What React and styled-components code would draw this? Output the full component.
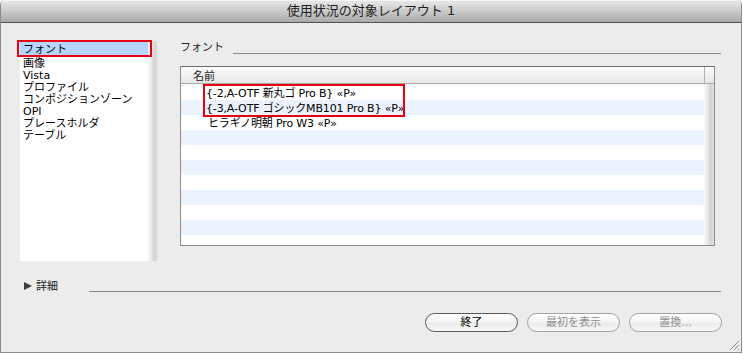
import React from 'react';
import styled, { createGlobalStyle } from 'styled-components';

const FONT = '"DejaVu Sans", "Noto Sans CJK JP", "Noto Sans", sans-serif';

const Global = createGlobalStyle`
  html, body { margin: 0; padding: 0; background: #ffffff; }
  body { font-family: ${FONT}; color: #000; }
  * { box-sizing: border-box; }
`;

const Window = styled.div`
  position: relative;
  width: 742px;
  height: 353px;
  border: 1px solid #8c8c8c;
  border-top: none;
  border-radius: 5px 5px 0 0;
  background: #ececec;
  display: flex;
  flex-direction: column;
  overflow: hidden;
`;

const TitleBar = styled.div`
  height: 23px;
  flex: none;
  border-bottom: 1px solid #555;
  border-radius: 5px 5px 0 0;
  background: linear-gradient(#e9e9e9, #d2d2d2 40%, #a9a9a9);
  box-shadow: inset 0 1px 0 #f6f6f6;
  text-align: center;
  font-size: 13px;
  line-height: 22px;
  color: #1e1e1e;
`;

const Body = styled.div`
  flex: 1;
  display: flex;
  flex-direction: column;
  padding: 17px 19px 0 19px;
`;

const MainRow = styled.div`
  display: flex;
  align-items: flex-start;
`;

const Sidebar = styled.div`
  display: flex;
  width: 138px;
  height: 220px;
  margin-top: 1px;
`;

const SideList = styled.div`
  position: relative;
  width: 128px;
  background: #fff;
`;

const SideItem = styled.div`
  font-size: 11px;
  line-height: 16px;
  height: ${p => (p.$selected ? '15px' : '12px')};
  padding: ${p => (p.$selected ? '1px' : '0')} 0 0 3px;
  background: ${p => (p.$selected ? '#b5d5ff' : 'transparent')};
  white-space: nowrap;
`;

const ScrollStrip = styled.div`
  width: ${p => p.$w || 10}px;
  flex: none;
  background: linear-gradient(to right, #f8f8f8, #e8e8e8 35%, #d2d2d2 65%, #e4e4e4);
`;

const Annotation = styled.div`
  position: absolute;
  border: 2px solid #e60012;
  pointer-events: none;
`;

const RightPanel = styled.div`
  margin-left: 22px;
  width: 541px;
  display: flex;
  flex-direction: column;
`;

const SectionHeader = styled.div`
  display: flex;
  height: 14px;
`;

const SectionLabel = styled.span`
  font-size: 11px;
  line-height: 15px;
  color: #222;
`;

const Rule = styled.div`
  flex: 1;
  height: 1px;
  align-self: flex-end;
  margin: 0 ${p => p.$right || 0}px ${p => p.$bottom || 0}px ${p => p.$left}px;
  background: #8a8a8a;
`;

const Table = styled.div`
  margin-top: 12px;
  width: 535px;
  height: 180px;
  border: 1px solid #8d8d8d;
  border-top-color: #6c6c6c;
  background: #fff;
  display: flex;
  flex-direction: column;
`;

const TableHead = styled.div`
  display: flex;
  height: 17px;
  flex: none;
  border-bottom: 1px solid #a8a8a8;
  background: linear-gradient(#fdfdfd, #f1f1f1 50%, #e6e6e6);
`;

const HeadCell = styled.div`
  flex: 1;
  padding-left: 12px;
  font-size: 11px;
  line-height: 19px;
  height: 16px;
  color: #222;
`;

const HeadCorner = styled.div`
  width: 10px;
  border-left: 1px solid #b0b0b0;
`;

const TableBody = styled.div`
  position: relative;
  flex: 1;
  display: flex;
  overflow: hidden;
`;

const Rows = styled.div`
  flex: 1;
  padding-top: 1px;
  overflow: hidden;
`;

const Row = styled.div`
  height: 15px;
  line-height: 17px;
  padding-left: ${p => p.$indent}px;
  font-size: 11px;
  letter-spacing: -0.15px;
  white-space: nowrap;
  background: ${p => (p.$alt ? '#edf3fe' : '#ffffff')};
`;

const DetailRow = styled.div`
  display: flex;
  height: 14px;
  margin-top: 18px;
  padding-left: 4px;
`;

const Disclosure = styled.span`
  width: 0;
  height: 0;
  margin-top: 3px;
  border-top: 4.5px solid transparent;
  border-bottom: 4.5px solid transparent;
  border-left: 8px solid #3c3c3c;
`;

const DetailLabel = styled.span`
  margin-left: 4px;
  font-size: 11px;
  line-height: 15px;
  color: #222;
`;

const ButtonRow = styled.div`
  display: flex;
  justify-content: flex-end;
  gap: 9px;
  margin-top: 20px;
`;

const Button = styled.button`
  width: 93px;
  height: 19px;
  padding: 0;
  border-radius: 10px;
  border: 1px solid ${p => (p.disabled ? '#a3a3a3' : '#5a5a5a')};
  background: linear-gradient(#ffffff, #f6f6f6 45%, #ebebeb 55%, #f7f7f7);
  font-family: ${FONT};
  font-size: 11px;
  line-height: 17px;
  color: ${p => (p.disabled ? '#909090' : '#000')};
`;

const Grip = styled.svg`
  position: absolute;
  right: 1px;
  bottom: 1px;
`;

const sideItems = ['フォント', '画像', 'Vista', 'プロファイル', 'コンポジションゾーン', 'OPI', 'プレースホルダ', 'テーブル'];
const fonts = [
  { t: '{-2,A-OTF 新丸ゴ Pro B} «P»', indent: 25 },
  { t: '{-3,A-OTF ゴシックMB101 Pro B} «P»', indent: 25 },
  { t: 'ヒラギノ明朝 Pro W3 «P»', indent: 27 },
];

export default function App() {
  const rows = Array.from({ length: 11 }, (_, i) => fonts[i] || { t: '', indent: 25 });
  return (
    <>
      <Global />
      <Window>
        <TitleBar>使用状況の対象レイアウト 1</TitleBar>
        <Body>
          <MainRow>
            <Sidebar>
              <SideList>
                {sideItems.map((t, i) => (
                  <SideItem key={t} $selected={i === 0}>{t}</SideItem>
                ))}
                <Annotation style={{ left: -3, top: -1, width: 135, height: 17 }} />
              </SideList>
              <ScrollStrip />
            </Sidebar>
            <RightPanel>
              <SectionHeader>
                <SectionLabel>フォント</SectionLabel>
                <Rule $left={9} />
              </SectionHeader>
              <Table>
                <TableHead>
                  <HeadCell>名前</HeadCell>
                  <HeadCorner />
                </TableHead>
                <TableBody>
                  <Rows>
                    {rows.map((r, i) => (
                      <Row key={i} $alt={i % 2 === 1} $indent={r.indent}>{r.t}</Row>
                    ))}
                  </Rows>
                  <ScrollStrip $w={10} />
                  <Annotation style={{ left: 22, top: 0, width: 202, height: 33 }} />
                </TableBody>
              </Table>
            </RightPanel>
          </MainRow>
          <DetailRow>
            <Disclosure />
            <DetailLabel>詳細</DetailLabel>
            <Rule $left={31} $right={1} $bottom={1} />
          </DetailRow>
          <ButtonRow>
            <Button>終了</Button>
            <Button disabled>最初を表示</Button>
            <Button disabled>置換...</Button>
          </ButtonRow>
        </Body>
        <Grip width="12" height="12" viewBox="0 0 12 12">
          <g stroke="#8a8a8a" strokeWidth="1">
            <line x1="11" y1="2" x2="2" y2="11" />
            <line x1="11" y1="6" x2="6" y2="11" />
            <line x1="11" y1="10" x2="10" y2="11" />
          </g>
          <g stroke="#ffffff" strokeWidth="1">
            <line x1="12" y1="3" x2="3" y2="12" />
            <line x1="12" y1="7" x2="7" y2="12" />
          </g>
        </Grip>
      </Window>
    </>
  );
}
